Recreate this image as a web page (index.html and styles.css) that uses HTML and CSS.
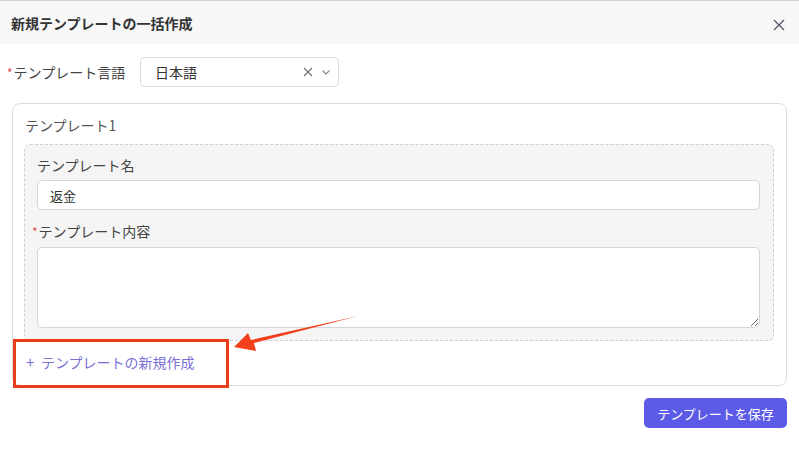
FILE: index.html
```html
<!DOCTYPE html>
<html>
<head>
    <meta charset="UTF-8">
    <meta name="viewport" content="width=device-width, initial-scale=1.0">
    <title>新規テンプレートの一括作成</title>
    <link rel="stylesheet" href="styles.css">
</head>

<body>

    <div class="dialog">
        <div class="dialog-header">
            <h1>新規テンプレートの一括作成</h1>
            <span class="close-btn">
                <svg width="12" height="12" viewBox="0 0 12 12"><path d="M1 1L11 11M11 1L1 11" stroke="#555a6e" stroke-width="1.4" fill="none"/></svg>
            </span>
        </div>

        <div class="dialog-body">
            <div class="form-row">
                <label class="form-label"><i class="req">*</i>テンプレート言語</label>
                <div class="select">
                    <span class="select-value">日本語</span>
                    <span class="select-icons">
                        <svg width="10" height="10" viewBox="0 0 10 10"><path d="M1 1L9 9M9 1L1 9" stroke="#777" stroke-width="1.3" fill="none"/></svg>
                        <svg width="10" height="10" viewBox="0 0 10 10"><path d="M1.5 3.5L5 7L8.5 3.5" stroke="#888" stroke-width="1.2" fill="none"/></svg>
                    </span>
                </div>
            </div>

            <div class="tpl-card">
                <div class="tpl-title">テンプレート1</div>
                <div class="tpl-panel">
                    <div class="field-label">テンプレート名</div>
                    <input class="text-input" type="text" value="返金">
                    <div class="field-label field-label-req"><i class="req">*</i>テンプレート内容</div>
                    <textarea class="text-area"></textarea>
                </div>
                <div class="add-link">
                    <span class="plus">+</span>テンプレートの新規作成
                    <span class="mark-box"></span>
                </div>

                <!-- 注釈の矢印 -->
                <svg class="mark-arrow" width="130" height="40" viewBox="0 0 130 40">
                    <path d="M126 1L22 28L24 36L2 32L16 18L19 25Z" fill="#f2401d"/>
                </svg>
            </div>

            <div class="dialog-footer">
                <button class="save-btn" type="button">テンプレートを保存</button>
            </div>
        </div>
    </div>

</body>
</html>
```

FILE: styles.css
```css
* {
    box-sizing: border-box;
}

body {
    margin: 0;
    font-family: "Noto Sans CJK JP", "Noto Sans", sans-serif;
    color: #333;
    background: #fff;
}

.dialog {
    width: 799px;
    height: 449px;
    border-top: 1px solid #d4d4d4;
}

.dialog-header {
    height: 43px;
    padding: 0 14px 0 11px;
    display: flex;
    align-items: center;
    justify-content: space-between;
    background: #f7f7f8;
}

.dialog-header h1 {
    margin: 0;
    font-size: 14px;
    font-weight: bold;
    color: #333;
}

.close-btn {
    display: flex;
    margin-top: 4px;
}

.dialog-body {
    padding: 13px 12px 0;
}

.form-row {
    display: flex;
    align-items: center;
}

.req {
    font-style: normal;
    color: #e34d4d;
    font-size: 12px;
    margin-right: 1px;
}

.form-label {
    width: 133px;
    margin-left: -5px;
    font-size: 14px;
    color: #444;
}

.select {
    width: 199px;
    height: 30px;
    padding: 0 7px 0 14px;
    display: flex;
    align-items: center;
    justify-content: space-between;
    border: 1px solid #dcdcdc;
    border-radius: 4px;
    font-size: 14px;
    color: #333;
}

.select-icons {
    display: flex;
    gap: 8px;
    align-items: center;
}

.tpl-card {
    position: relative;
    margin-top: 16px;
    height: 283px;
    padding: 11px 12px 0 11px;
    border: 1px solid #dddddd;
    border-radius: 8px;
}

.tpl-title {
    margin-left: 1px;
    font-size: 14px;
    line-height: 20px;
    color: #555;
}

.tpl-panel {
    margin-top: 9px;
    height: 197px;
    padding: 10px 12px 0;
    background: #f5f5f5;
    border: 1px dashed #cfcfcf;
    border-radius: 6px;
}

.field-label {
    font-size: 14px;
    line-height: 20px;
    color: #444;
}

.field-label-req {
    margin-top: 11px;
    margin-left: -5px;
}

.text-input,
.text-area {
    display: block;
    width: 723px;
    margin-top: 5px;
    padding: 0 12px;
    border: 1px solid #d6d6d6;
    border-radius: 5px;
    background: #fff;
    font-family: inherit;
    font-size: 13px;
    color: #333;
    outline: none;
}

.text-input {
    height: 30px;
}

.text-area {
    height: 81px;
    resize: vertical;
}

.add-link {
    position: relative;
    margin-top: 11px;
    margin-left: 2px;
    font-size: 14px;
    line-height: 20px;
    color: #7a70d6;
}

.plus {
    display: inline-block;
    width: 15px;
    font-size: 15px;
}

/* 赤枠の注釈 */
.mark-box {
    position: absolute;
    left: -13px;
    top: -13px;
    width: 216px;
    height: 49px;
    border: 3px solid #e63e1a;
}

.mark-arrow {
    position: absolute;
    left: 219px;
    top: 211px;
}

.dialog-footer {
    display: flex;
    justify-content: flex-end;
    margin-top: 12px;
}

.save-btn {
    width: 143px;
    height: 30px;
    border: none;
    border-radius: 5px;
    background: #5b5be8;
    color: #fff;
    font-family: inherit;
    font-size: 13px;
    cursor: pointer;
}
```
